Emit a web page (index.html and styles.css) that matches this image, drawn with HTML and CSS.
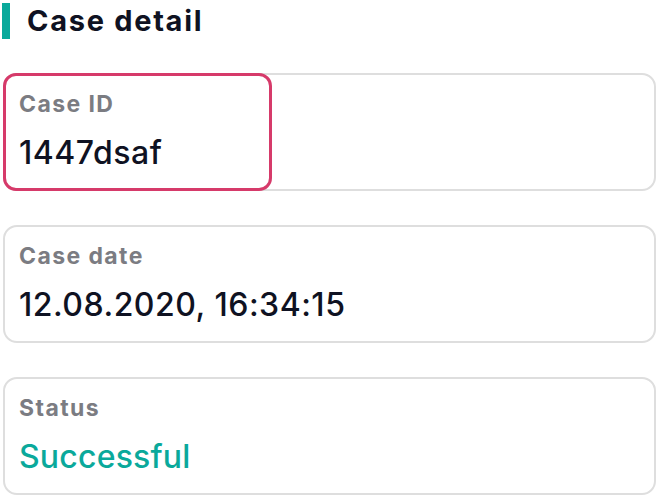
FILE: index.html
```html
<!DOCTYPE html>
<html>
<head>
<meta charset="utf-8">
<link rel="stylesheet" href="styles.css">
</head>
<body>
<div class="page">
  <h1 class="title">Case detail</h1>
  <div class="list">
    <div class="card">
      <div class="label">Case ID</div>
      <div class="value">1447dsaf</div>
      <div class="highlight"></div>
    </div>
    <div class="card">
      <div class="label">Case date</div>
      <div class="value">12.08.2020, 16:34:15</div>
    </div>
    <div class="card">
      <div class="label">Status</div>
      <div class="value success">Successful</div>
    </div>
  </div>
</div>
</body>
</html>
```
FILE: styles.css
```css
html, body {
  margin: 0;
  padding: 0;
  background: #ffffff;
}
body {
  font-family: Inter, "Noto Sans", sans-serif;
}
.page {
  padding: 3px 4px 0 3px;
}
.title {
  margin: 0;
  position: relative;
  padding-left: 24px;
  font-size: 29px;
  font-weight: 700;
  letter-spacing: 1.7px;
  line-height: 36px;
  color: #0f1222;
}
.title::before {
  content: "";
  position: absolute;
  left: -1px;
  top: 0;
  width: 8px;
  height: 36px;
  background: #0aa99b;
}
.list {
  display: flex;
  flex-direction: column;
  gap: 34px;
  margin-top: 34px;
}
.card {
  position: relative;
  height: 118px;
  box-sizing: border-box;
  border: 2px solid #dedede;
  border-radius: 14px;
  padding: 15px 14px 0 14px;
}
.label {
  font-size: 23px;
  font-weight: 700;
  letter-spacing: 1.4px;
  line-height: 28px;
  color: #7b7c82;
}
.value {
  margin-top: 16px;
  font-size: 32px;
  font-weight: 500;
  letter-spacing: 0.5px;
  line-height: 38px;
  color: #0f1222;
}
.value.success {
  color: #0aa99b;
  letter-spacing: 0.2px;
}
.highlight {
  position: absolute;
  left: -2px;
  top: -2px;
  width: 269px;
  height: 118px;
  box-sizing: border-box;
  border: 3px solid #d63a6a;
  border-radius: 13px;
}
```
